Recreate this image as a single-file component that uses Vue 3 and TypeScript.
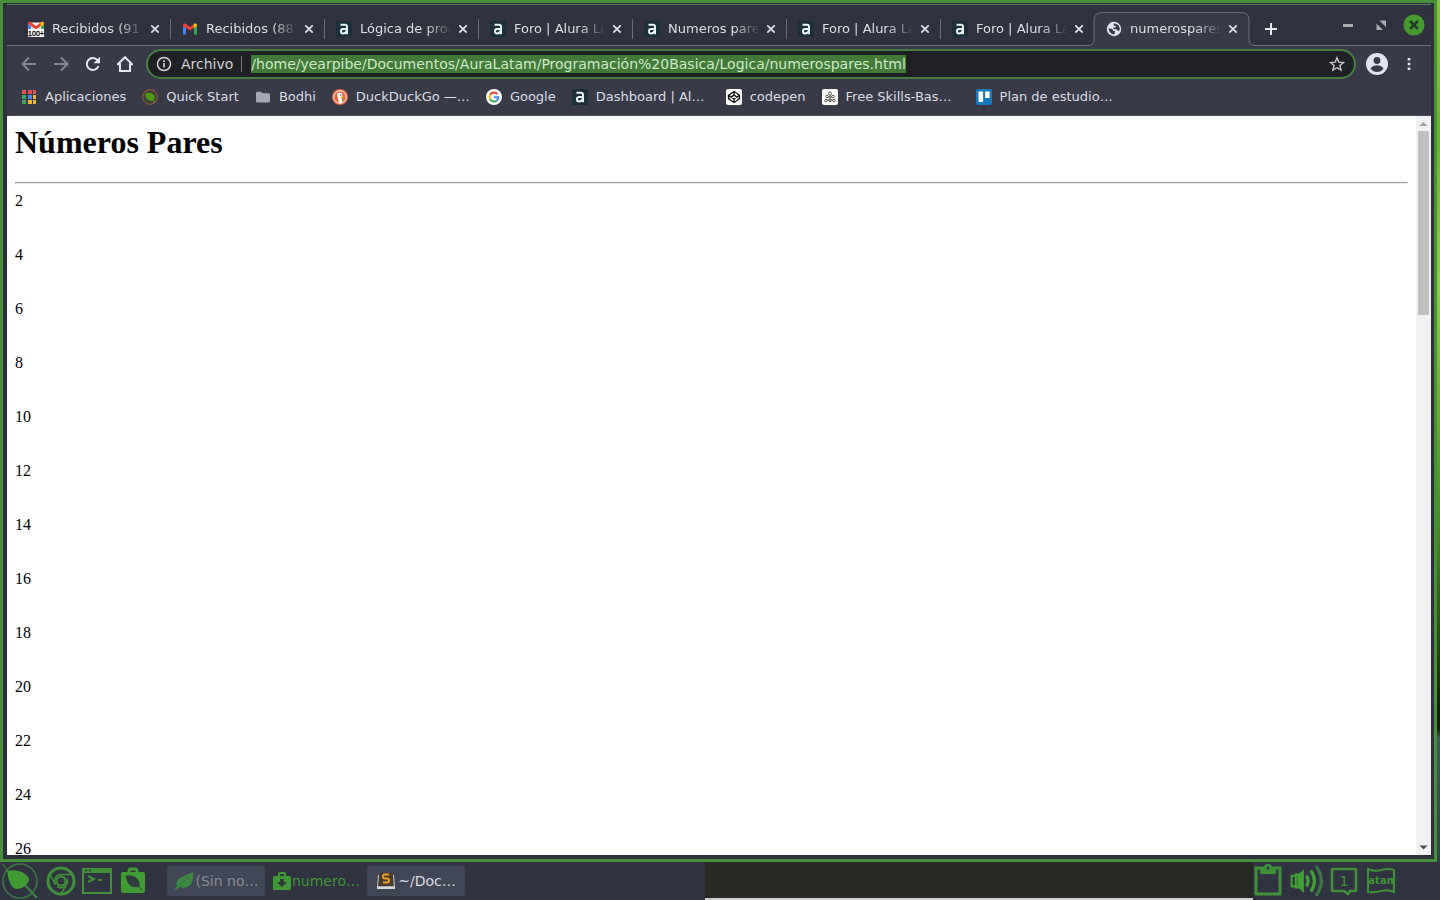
<script setup lang="ts">
interface Tab { icon: string; title: string; active?: boolean }
interface Bookmark { icon: string; label: string; long?: boolean }
interface Task { icon: string; label: string; kind: string }

const tabs: Tab[] = [
  { icon: 'mail-count', title: 'Recibidos (917)' },
  { icon: 'mail', title: 'Recibidos (887)' },
  { icon: 'alura', title: 'Lógica de programación' },
  { icon: 'alura', title: 'Foro | Alura Latam' },
  { icon: 'alura', title: 'Numeros pares' },
  { icon: 'alura', title: 'Foro | Alura Latam' },
  { icon: 'alura', title: 'Foro | Alura Latam' },
  { icon: 'globe', title: 'numerospares.html', active: true },
]

const bookmarks: Bookmark[] = [
  { icon: 'apps', label: 'Aplicaciones' },
  { icon: 'quick', label: 'Quick Start' },
  { icon: 'folder', label: 'Bodhi' },
  { icon: 'duck', label: 'DuckDuckGo —…', long: true },
  { icon: 'google', label: 'Google' },
  { icon: 'alura', label: 'Dashboard | Al…', long: true },
  { icon: 'codepen', label: 'codepen' },
  { icon: 'skills', label: 'Free Skills-Bas…', long: true },
  { icon: 'trello', label: 'Plan de estudio…', long: true },
]

const tasks: Task[] = [
  { icon: 'leaf', label: '(Sin no…', kind: 'dim' },
  { icon: 'bag-down', label: 'numero…', kind: 'current' },
  { icon: 'sublime', label: '~/Doc…', kind: 'normal' },
]

const numbers: number[] = Array.from({ length: 13 }, (_, i) => (i + 1) * 2)
const url = '/home/yearpibe/Documentos/AuraLatam/Programación%20Basica/Logica/numerospares.html'
</script>

<template>
  <svg class="sprites" aria-hidden="true">
    <symbol id="mail" viewBox="0 0 16 16">
      <path d="M1 5v8.500h3V7z" fill="#4285f4" />
      <path d="M12 7v6.500h3V5z" fill="#34a853" />
      <path d="M1 4.500C1 2.500 3 2 4.300 3L8 5.900 11.700 3v3.700L8 9.500 1 5z" fill="#ea4335" />
      <path d="M11.700 3C13 2 15 2.500 15 4.500V5l-3.300 2.500z" fill="#fbbc04" />
    </symbol>
    <symbol id="mail-count" viewBox="0 0 16 16">
      <path d="M0 1.500h16V9H0z" fill="#eee" />
      <path d="M0 3v5h3V5z" fill="#4285f4" />
      <path d="M13 5v3h3V3z" fill="#34a853" />
      <path d="M0 1l2-.5L8 5l6-4.500 2 .5v2L8 8.500 0 3z" fill="#ea4335" />
      <path d="M12.500 2L14.500.5 16 2v1.500L12.500 6z" fill="#fbbc04" />
      <path d="M0 8h16v8H0z" fill="#fff" />
      <text x="8" y="15" text-anchor="middle" font-family="Liberation Sans, sans-serif" font-size="7" fill="#000" stroke="#000" stroke-width=".3">100+</text>
    </symbol>
    <symbol id="alura" viewBox="0 0 16 16">
      <path d="M0 0h16v16H0z" fill="#1c3039" />
      <path d="M4.500 3.700H9q2 0 2 2v7.500M11 8H7.200Q5 8 5 10.200t2 2.200q3 0 4-3" fill="none" stroke="#e8f6f5" stroke-width="2" />
    </symbol>
    <symbol id="globe" viewBox="0 0 16 16">
      <circle cx="8" cy="8" r="7.200" fill="#e2e5ef" />
      <path d="M2.500 7.500l3 .3q1.700.2 1.500 2l2 .2-.5 3.400q-5 0-6-5.900M8.300 2.200L7.200 4.400l2.600.4-.2 1.800-2.800.2 1 1.300 3 .4 1.300 1.700 1.700-1.400q.4-5.300-5.500-6.600" fill="#383a48" />
    </symbol>
    <symbol id="apps" viewBox="0 0 16 16">
      <path d="M1 1h4v4H1zM7 1h4v4H7zM12 1h3v4h-3z" fill="#e9504b" />
      <path d="M1 6h4v4H1z" fill="#3ba55d" /><path d="M7 6h4v4H7z" fill="#4f86ec" /><path d="M12 6h3v4h-3z" fill="#efb730" />
      <path d="M1 11h4v4H1z" fill="#3ba55d" /><path d="M7 11h4v4H7zM12 11h3v4h-3z" fill="#efb730" />
    </symbol>
    <symbol id="quick" viewBox="0 0 16 16">
      <circle cx="8" cy="8" r="7.300" fill="#3d4038" stroke="#8a5843" stroke-width="1.200" />
      <path d="M3.500 4.500Q8 3 11 5t1 6q-3 2-6 0T3.500 4.500" fill="#4c9a0c" /><path d="M10 10l3 3" stroke="#4c9a0c" />
    </symbol>
    <symbol id="folder" viewBox="0 0 16 16"><path d="M1 4q0-1.300 1.300-1.300H6L7.500 4.300h6Q15 4.300 15 5.600V12q0 1.500-1.500 1.500h-11Q1 13.500 1 12z" fill="#a6a9b5" /></symbol>
    <symbol id="duck" viewBox="0 0 16 16">
      <circle cx="8" cy="8" r="8" fill="#e8633b" /><circle cx="8" cy="8" r="6.300" fill="none" stroke="#fff" />
      <path d="M5.200 4.600q2.300-1.800 4.300-.5Q11 5.200 10.300 8l-.7 1 .8 4.600q-2.300.6-3.400 0L5.600 8z" fill="#fff" />
      <path d="M8.500 8q2-.8 3.300 0-1 1.400-3.300 1z" fill="#f5b400" /><circle cx="8.800" cy="6" r=".7" fill="#34506d" /><path d="M9 11l2.500-.5v2z" fill="#67b64c" />
    </symbol>
    <symbol id="google" viewBox="0 0 16 16">
      <circle cx="8" cy="8" r="8" fill="#fff" />
      <g fill="none" stroke-width="2"><path d="M4.200 5.800A4.400 4.400 0 0 1 11.300 5" stroke="#ea4335" /><path d="M4.200 5.800a4.400 4.400 0 0 0 0 4.400" stroke="#fbbc05" /><path d="M4.200 10.200a4.400 4.400 0 0 0 6.800 1.200" stroke="#34a853" /><path d="M11 11.400q1.400-1.300 1.400-3.100H8" stroke="#4285f4" /></g>
    </symbol>
    <symbol id="codepen" viewBox="0 0 16 16">
      <rect width="16" height="16" rx="2" fill="#fff" />
      <path d="M8 2.500l5.500 3.700v3.600L8 13.500 2.500 9.800V6.200zM2.500 6.200L8 9.900l5.500-3.700M2.500 9.800L8 6.100l5.500 3.700M8 2.500v3.600M8 9.900v3.600" fill="none" stroke="#111" stroke-width="1.300" stroke-linejoin="round" />
    </symbol>
    <symbol id="skills" viewBox="0 0 16 16">
      <rect width="16" height="16" rx="2" fill="#fff" />
      <g fill="none" stroke="#55574f"><circle cx="8" cy="4.500" r="1.500" /><circle cx="5" cy="7.500" r="1.300" /><circle cx="11" cy="7.500" r="1.300" /><circle cx="4" cy="11.500" r="1.300" /><circle cx="8" cy="11.500" r="1.300" /><circle cx="12" cy="11.500" r="1.300" /><path d="M8 6v4M6 8h4M5 11h6" /></g>
    </symbol>
    <symbol id="trello" viewBox="0 0 16 16"><rect width="16" height="16" rx="2" fill="#1478bd" /><rect x="2.500" y="2.500" width="4.600" height="10.500" rx=".8" fill="#fff" /><rect x="9" y="2.500" width="4.600" height="6.500" rx=".8" fill="#fff" /></symbol>
    <symbol id="close" viewBox="0 0 10 10"><path d="M1.300 1.300l7.400 7.400M8.700 1.300L1.300 8.700" fill="none" stroke="#dfe2ec" stroke-width="1.700" /></symbol>
    <symbol id="leaf" viewBox="0 0 20 20"><path d="M1 18l2-3Q1 10 6 7l13-6q1 9-3 13t-10 2l-4 3z" fill="#3c8a40" /><path d="M4 15L15 6" fill="none" stroke="#3a6e46" /></symbol>
    <symbol id="bag-down" viewBox="0 0 20 20"><path d="M7 5V3q0-1 1-1h4q1 0 1 1v2" fill="none" stroke="#3f9a35" stroke-width="2" /><rect x="1" y="5" width="18" height="14" rx="1.500" fill="#3f9a35" /><path d="M8 8h4v3h3l-5 5-5-5h3z" fill="#2f3e3b" /></symbol>
    <symbol id="sublime" viewBox="0 0 20 20"><path d="M3 2L1 16v2h18v-2L17 2z" fill="#4a3c30" /><path d="M2.500 4L1.500 16h17l-1-12" fill="none" stroke="#c9cace" /><path d="M1 15.500h18V18H1z" fill="#d8d9dc" /><path d="M13 3.500H9q-2 0-2 2t2 2h2q2 0 2 2t-2 2H7" fill="none" stroke="#f39a24" stroke-width="2" /></symbol>
  </svg>

  <div class="desktop">
    <div class="window">
      <div class="browser">
        <header class="strip">
          <div class="tabs">
            <div v-for="(tab, i) in tabs" :key="i" class="tab" :class="{ active: tab.active, before: tabs[i + 1]?.active }">
              <svg v-if="tab.active" class="shape" viewBox="0 0 172 34"><path d="M0 33.500h2q6 0 6-6V8.500q0-8 8-8h139q8 0 8 8v19q0 6 6 6h3V34H0z" fill="#383a48" /><path d="M0 33.500h2q6 0 6-6V8.500q0-8 8-8h139q8 0 8 8v19q0 6 6 6h3" fill="none" stroke="#6c6f7a" /></svg>
              <svg class="fav"><use :href="'#' + tab.icon" /></svg>
              <span class="title">{{ tab.title }}</span>
              <button class="close" aria-label="Cerrar pestaña"><svg><use href="#close" /></svg></button>
            </div>
            <button class="plus" aria-label="Nueva pestaña"><svg viewBox="0 0 12 12"><path d="M6 0v12M0 6h12" stroke="#e4e7f0" stroke-width="2" /></svg></button>
          </div>
          <div class="controls">
            <button aria-label="Minimizar"><svg viewBox="0 0 22 22"><path d="M6 11.500h10" stroke="#a9acb3" stroke-width="3" /></svg></button>
            <button aria-label="Restaurar"><svg viewBox="0 0 22 22"><path d="M9.500 6.500H16v6.500zM6.500 9.500V16h6.500z" fill="#a9acb3" /></svg></button>
            <button aria-label="Cerrar"><svg viewBox="0 0 22 22"><circle cx="11" cy="11" r="10.500" fill="#479b31" /><path d="M7 7l8 8M15 7l-8 8" stroke="#253d2a" stroke-width="2.600" /></svg></button>
          </div>
        </header>

        <nav class="toolbar">
          <button class="off" aria-label="Atrás"><svg viewBox="0 0 16 16"><path d="M15 8H2M8 1.500L1.500 8 8 14.500" /></svg></button>
          <button class="off" aria-label="Adelante"><svg viewBox="0 0 16 16"><path d="M1 8h13M8 1.500L14.500 8 8 14.500" /></svg></button>
          <button aria-label="Recargar"><svg viewBox="0 0 16 16"><path d="M13.500 10A6 6 0 1 1 12.500 4.200L14 6" /><path d="M15 .8v6.400H8.600z" fill="#e4e7f2" stroke="none" /></svg></button>
          <button class="home" aria-label="Inicio"><svg viewBox="0 0 16 16"><path d="M.8 8.300L8 1.200l7.200 7.100H13V15H3V8.300z" /></svg></button>
          <div class="address">
            <svg class="info" viewBox="0 0 16 16"><circle cx="8" cy="8" r="6.500" fill="none" stroke="#d5d7da" stroke-width="1.500" /><path d="M8 7v4.500M8 4.300v1.700" stroke="#d5d7da" stroke-width="1.700" /></svg>
            <label for="url">Archivo</label>
            <span class="bar"></span>
            <input id="url" type="text" :value="url" spellcheck="false" />
            <button class="star" aria-label="Añadir a marcadores"><svg viewBox="0 0 16 16"><path d="M8 1.800l1.800 4.300 4.700.4-3.600 3 1.100 4.600L8 11.700l-4 2.400 1.100-4.600-3.600-3 4.700-.4z" fill="none" stroke="#c8cbcf" stroke-width="1.400" /></svg></button>
          </div>
          <button class="avatar" aria-label="Perfil"><svg viewBox="0 0 22 22"><circle cx="11" cy="11" r="11" fill="#e0e3f2" /><circle cx="11" cy="7.500" r="3.400" fill="#383a48" /><path d="M4.500 15.500q2.500-3.300 6.500-3.300t6.500 3.300Q15 19 11 19t-6.500-3.500" fill="#383a48" /></svg></button>
          <button class="more" aria-label="Menú"><svg viewBox="0 0 16 16"><path d="M6.700 2h2.600v2.600H6.700zM6.700 6.700h2.600v2.600H6.700zM6.700 11.400h2.600V14H6.700z" fill="#e4e7f2" stroke="none" /></svg></button>
        </nav>

        <nav class="bookmarks">
          <a v-for="b in bookmarks" :key="b.label" href="#" :class="{ long: b.long }"><svg><use :href="'#' + b.icon" /></svg>{{ b.label }}</a>
        </nav>

        <div class="view">
          <main>
            <h1>Números Pares</h1>
            <hr />
            <p v-for="n in numbers" :key="n">{{ n }}</p>
          </main>
          <div class="scroll">
            <svg viewBox="0 0 15 15"><path d="M3.500 10L7.500 6l4 4z" fill="#a0a0a0" /></svg>
            <div class="track"><div class="thumb"></div></div>
            <svg viewBox="0 0 15 15"><path d="M3.500 5.500l4 4 4-4z" fill="#4c4c4c" /></svg>
          </div>
        </div>
      </div>
    </div>

    <footer class="taskbar">
      <div class="left">
        <div class="launchers">
          <button aria-label="Menú Bodhi"><svg class="big" viewBox="0 0 36 36"><circle cx="18" cy="18" r="17" fill="none" stroke="#3c7846" stroke-width="1.600" /><path d="M1 1l5 8" stroke="#3f9a35" /><path d="M5 8Q14 6 20 9Q27 13 27 17Q26 20 24 22Q20 26 14 26Q10 25 8 20Q6 15 5 8" fill="#409b32" /><path d="M23 22l12 13" stroke="#3c8444" stroke-width="2" /></svg></button>
          <button class="second" aria-label="Chrome"><svg viewBox="0 0 30 30"><g fill="none" stroke="#3f9138" stroke-width="1.500"><circle cx="15" cy="15" r="13" stroke-width="3" /><circle cx="15" cy="15" r="4.500" stroke-width="2" /><path d="M14 8.500h12M9.500 18.500L4.500 9.500M20.500 18.500L15 28" /><path d="M9.500 18.500a6.500 6.500 0 0 1 5.500-10M21 12.500a6.500 6.500 0 0 1-.5 6M19 20.300a6.500 6.500 0 0 1-8 0" /></g></svg></button>
          <button aria-label="Terminal"><svg viewBox="0 0 30 30"><rect x="1" y="3" width="28" height="24" fill="none" stroke="#3f9138" stroke-width="2" /><path d="M1 3h28v4H1z" fill="#3f9138" /><path d="M3 4.500h2M7 4.500h2" stroke="#2f343f" stroke-width="1.500" /><path d="M6 10l6 3-6 3M16 14h4" fill="none" stroke="#3f9138" stroke-width="2" /></svg></button>
          <button aria-label="AppCenter"><svg viewBox="0 0 30 30"><path d="M11 8V5q0-2 2-2h4q2 0 2 2v3" fill="none" stroke="#409b32" stroke-width="3" /><rect x="3" y="6" width="24" height="21" rx="2" fill="#409b32" /><path d="M8 10q7-1 10 2 4 3 3 8-6 2-9-1-3-3-4-9M19 19l5 5" fill="#2f3e3b" stroke="#2f3e3b" /></svg></button>
        </div>
        <div class="tasks">
          <button v-for="t in tasks" :key="t.label" :class="t.kind"><svg><use :href="'#' + t.icon" /></svg>{{ t.label }}</button>
        </div>
      </div>
      <div class="middle"></div>
      <div class="tray">
        <button aria-label="Portapapeles"><svg viewBox="1 1 34 34"><rect x="4" y="5" width="24" height="26" fill="none" stroke="#3f9138" stroke-width="3" /><path d="M8 4h4q0-3 4-3t4 3h4v7H8z" fill="#3f9138" /><circle cx="16" cy="5" r="1.500" fill="#2f343f" /></svg></button>
        <button aria-label="Volumen"><svg viewBox="2 1 31 32"><g fill="none" stroke="#40a033" stroke-width="3"><path d="M7 12H3v10h4M7 11h4V23H7z" stroke-width="2" /><path d="M9 12l5-5v20l-5-5z" fill="#40a033" stroke-width="1" /><path d="M17 12q3 5 0 10" /><path d="M21 7q7 10 0 20" /><path d="M26 3q10 14 0 28" stroke="#3a7644" /></g></svg></button>
        <button aria-label="Notificaciones" class="note"><svg viewBox="0 0 34 34"><path d="M5 6q0-1 1-1h22q1 0 1 1v20q0 1-1 1h-5l-2 3-4-3H6q-1 0-1-1z" fill="none" stroke="#3f9138" stroke-width="2.500" /></svg><span>1</span></button>
        <button aria-label="Teclado" class="keys"><svg viewBox="0 0 34 34"><path d="M4 5q6 3 13 1t13 0v22q-6-3-13-1T4 28z" fill="none" stroke="#3f9138" stroke-width="2" /></svg><span>latam</span></button>
      </div>
    </footer>
  </div>
</template>

<style>
html, body { margin: 0; overflow: hidden; }
</style>

<style scoped>
* { box-sizing: border-box; }
svg { display: block; flex: none; }
button { display: flex; align-items: center; justify-content: center; padding: 0; border: 0; background: none; font: inherit; color: inherit; flex: none; }
.sprites { position: absolute; width: 0; height: 0; }
.desktop {
  height: 100vh; display: flex; flex-direction: column;
  font: 13px "DejaVu Sans", sans-serif; color: #dcdee6;
  background: linear-gradient(#8ac43e 0, #6fb32c 15%, #8fd045 32%, #4c8c22 58%, #122609 78%, #142008 81%, #405861 82%, #263b43 100%);
}
.window { flex: 1; min-height: 0; margin-right: 3px; border: 3px solid #46903a; background: #2c303b; padding: 1px 3px 4px 4px; display: flex; }
.browser { flex: 1; min-width: 0; display: flex; flex-direction: column; border-top: 1px solid #53805a; background: #383a48; }
.strip { height: 41px; padding: 7px 6px 0 10px; display: flex; justify-content: space-between; background: #30333f; border-bottom: 1px solid #6c6f7a; flex: none; }
.tabs { display: flex; }
.tab { position: relative; width: 154px; height: 33px; padding: 0 8px 0 11px; display: flex; align-items: center; flex: none; }
.tab::after { content: ""; position: absolute; right: 0; top: 7px; width: 1px; height: 20px; background: #6c6f7a; }
.tab.active::after, .tab.before::after { display: none; }
.shape { position: absolute; left: -9px; top: 0; width: 172px; height: 34px; }
.fav { position: relative; width: 16px; height: 16px; }
.title { position: relative; width: 92px; margin-left: 8px; overflow: hidden; white-space: nowrap; line-height: 18px; -webkit-mask-image: linear-gradient(90deg, #000 66px, transparent 92px); mask-image: linear-gradient(90deg, #000 66px, transparent 92px); }
.close { position: relative; width: 16px; height: 16px; margin-left: 5px; }
.close svg { width: 10px; height: 10px; }
.plus { width: 44px; height: 34px; }
.plus svg { width: 12px; height: 12px; }
.controls { display: flex; gap: 11px; height: 26px; align-items: center; }
.controls svg { width: 22px; height: 22px; }
.toolbar { height: 36px; padding: 0 11px 0 14px; display: flex; align-items: center; flex: none; }
.toolbar > button { width: 32px; height: 32px; justify-content: flex-start; }
.toolbar > button svg { width: 16px; height: 16px; fill: none; stroke: #e4e7f2; stroke-width: 2; }
.toolbar > .off svg { stroke: #82848f; }
.toolbar > .home { width: 29px; }
.toolbar > .avatar { width: 35px; margin-left: 10px; }
.toolbar > .avatar svg { width: 22px; height: 22px; stroke: none; }
.toolbar > .more { width: 19px; }
.address { flex: 1; min-width: 0; height: 30px; padding: 0 9px 0 8px; display: flex; align-items: center; border: 2px solid #487e42; border-radius: 15px; background: #1f2124; font-size: 14px; }
.address label { margin-left: 9px; color: #cfd1d5; line-height: 18px; }
.info { width: 16px; height: 16px; }
.bar { width: 1px; height: 16px; margin: 0 9px 0 8px; background: #74777c; }
.address input { field-sizing: content; min-width: 0; height: 18px; margin: 0 auto 0 0; padding: 0; border: 0; outline: 0; background: #407a36; color: #cdebc5; font: 14px "DejaVu Sans", sans-serif; }
.star svg { width: 16px; height: 16px; }
.bookmarks { height: 34px; padding: 0 14px 4px; display: flex; align-items: center; gap: 16px; border-bottom: 1px solid #4a4d5a; flex: none; }
.bookmarks a { display: flex; align-items: center; gap: 8px; color: inherit; text-decoration: none; white-space: nowrap; line-height: 18px; }
.bookmarks .long { min-width: 138px; }
.bookmarks svg { width: 16px; height: 16px; }
.view { flex: 1; min-height: 0; display: flex; background: #fff; }
main { flex: 1; padding: 8px; overflow: hidden; font: 16px/18px "Liberation Serif", serif; color: #000; }
h1 { margin: 0 0 21px; font-size: 32px; line-height: 37px; }
hr { margin: 0 0 8px; border: 1px solid; border-color: #9a9a9a #eee #eee #9a9a9a; }
p { margin: 0 0 36px; }
.scroll { width: 15px; display: flex; flex-direction: column; background: #f1f1f1; }
.scroll svg { width: 15px; height: 15px; }
.track { flex: 1; padding: 0 2px; }
.thumb { height: 26%; background: #c1c1c1; }
.taskbar { height: 38px; display: flex; flex: none; background: #2f3440; }
.left { flex: 0 1 705px; display: flex; align-items: center; }
.launchers { display: flex; align-items: center; gap: 6px; width: 167px; padding-left: 2px; }
.launchers svg { width: 30px; height: 30px; }
.launchers .big { width: 36px; height: 36px; }
.launchers .second { margin-left: 2px; }
.tasks { display: flex; font-size: 14px; }
.tasks button { width: 98px; height: 30px; gap: 2px; border-radius: 2px; background: #414656; color: #d8dbe3; white-space: nowrap; }
.tasks svg { width: 20px; height: 20px; }
.tasks .dim { color: #888c98; }
.tasks .current { width: 102px; gap: 0; background: none; color: #419537; }
.middle { flex: 1; background: #292923; border-bottom: 2px solid #cfcfd1; }
.tray { width: 187px; display: flex; align-items: center; gap: 3px; color: #3f9138; }
.tray svg { width: 34px; height: 34px; overflow: visible; }
.tray button { position: relative; width: 34px; height: 34px; }
.tray span { position: absolute; left: 4px; right: 4px; top: 9px; display: flex; justify-content: center; overflow: hidden; line-height: 16px; font-size: 14px; }
.tray .keys span { font-size: 10px; font-weight: 700; }
</style>
